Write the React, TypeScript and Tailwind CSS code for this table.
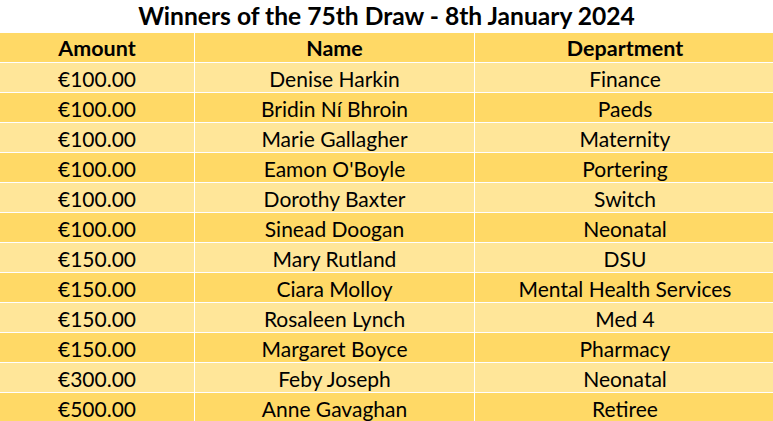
import React from "react";

const rows: [string, string, string][] = [
  ["€100.00", "Denise Harkin", "Finance"],
  ["€100.00", "Bridin Ní Bhroin", "Paeds"],
  ["€100.00", "Marie Gallagher", "Maternity"],
  ["€100.00", "Eamon O'Boyle", "Portering"],
  ["€100.00", "Dorothy Baxter", "Switch"],
  ["€100.00", "Sinead Doogan", "Neonatal"],
  ["€150.00", "Mary Rutland", "DSU"],
  ["€150.00", "Ciara Molloy", "Mental Health Services"],
  ["€150.00", "Rosaleen Lynch", "Med 4"],
  ["€150.00", "Margaret Boyce", "Pharmacy"],
  ["€300.00", "Feby Joseph", "Neonatal"],
  ["€500.00", "Anne Gavaghan", "Retiree"],
];

export default function App() {
  return (
    <div
      className="w-[773px] h-[421px] overflow-hidden bg-white text-black"
      style={{ fontFamily: "Lato, 'Open Sans', sans-serif" }}
    >
      <div className="h-[33px] flex items-center justify-center text-[24.6px] font-bold leading-none">
        Winners of the 75th Draw - 8th January 2024
      </div>
      <div className="grid grid-cols-[194px_279px_300px] bg-white gap-x-px gap-y-px">
        {["Amount", "Name", "Department"].map((c, j) => (
          <div
            key={"h" + j}
            className="h-[29px] pt-[2px] bg-[#FFD966] flex items-center justify-center text-[21.5px] font-bold leading-none"
          >
            {c}
          </div>
        ))}
        {rows.map((r, i) => (
          <React.Fragment key={i}>
            {r.map((c, j) => (
              <div
                key={j}
                className={
                  "h-[29px] pt-[2px] flex items-center justify-center text-[21px] leading-none " +
                  (i % 2 === 0 ? "bg-[#FFE699]" : "bg-[#FFD966]")
                }
              >
                {c}
              </div>
            ))}
          </React.Fragment>
        ))}
      </div>
    </div>
  );
}
